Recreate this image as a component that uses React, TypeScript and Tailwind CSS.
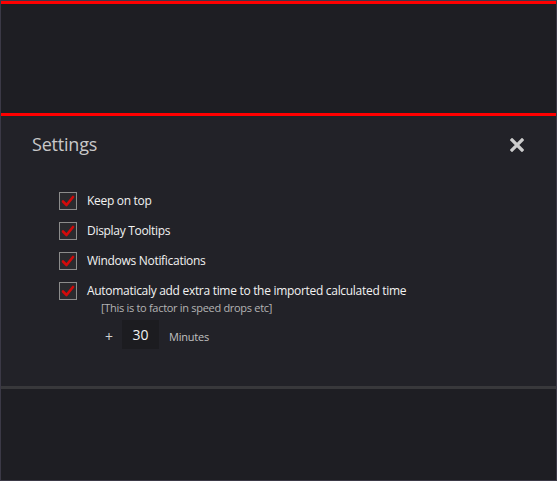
import React from "react";

function CheckRow({ label }: { label: string }) {
  return (
    <div className="flex items-center h-[30px]">
      <div className="w-[18px] h-[18px] border border-[#8c8c8c] bg-[#2a2a2e] flex items-center justify-center">
        <svg width="14" height="12" viewBox="0 0 14 12">
          <path d="M2 6.5 L5.5 10 L12 2" fill="none" stroke="#d20a0a" strokeWidth="2.6" strokeLinecap="round" strokeLinejoin="round" />
        </svg>
      </div>
      <span className="ml-[10px] text-[12px] tracking-[-0.3px] text-[#f2f2f2]">{label}</span>
    </div>
  );
}

export default function App() {
  return (
    <div
      className="w-[557px] h-[481px] border border-[#3b3946] bg-[#1e1e23] flex flex-col overflow-hidden"
      style={{ fontFamily: '"Open Sans", "Noto Sans", sans-serif' }}
    >
      <div className="h-[3px] bg-[#ff0000] shrink-0" />
      <div className="h-[109px] shrink-0" />
      <div className="h-[3px] bg-[#ff0000] shrink-0" />
      <div className="h-[270px] shrink-0 bg-[#222228] flex flex-col">
        <div className="flex items-center justify-between pl-[31px] pr-[32px] pt-[15px]">
          <h1 className="text-[18px] tracking-[-0.2px] text-[#c8c8c8] leading-[26px]">Settings</h1>
          <svg width="14" height="14" viewBox="0 0 14 14" className="mt-[1px]">
            <path d="M2 2 L12 12 M12 2 L2 12" stroke="#cccccc" strokeWidth="3.2" strokeLinecap="square" />
          </svg>
        </div>
        <div className="pl-[58px] pt-[29px] flex flex-col">
          <CheckRow label="Keep on top" />
          <CheckRow label="Display Tooltips" />
          <CheckRow label="Windows Notifications" />
          <CheckRow label="Automaticaly add extra time to the imported calculated time" />
          <div className="pl-[42px] -mt-[6px] text-[11px] tracking-[-0.3px] text-[#b4b4b4] leading-[16px]">
            [This is to factor in speed drops etc]
          </div>
          <div className="flex items-center pl-[46px] mt-[4px]">
            <span className="text-[14px] text-[#d0d0d0] w-[17px] pt-[3px]">+</span>
            <div className="w-[37px] h-[29px] bg-[#1c1c20] flex items-center justify-center text-[14px] text-[#f2f2f2]">
              30
            </div>
            <span className="ml-[10px] text-[11px] tracking-[-0.2px] text-[#c0c0c0] pt-[5px]">Minutes</span>
          </div>
        </div>
      </div>
      <div className="h-[3px] bg-[#38383b] shrink-0" />
      <div className="flex-1" />
    </div>
  );
}
